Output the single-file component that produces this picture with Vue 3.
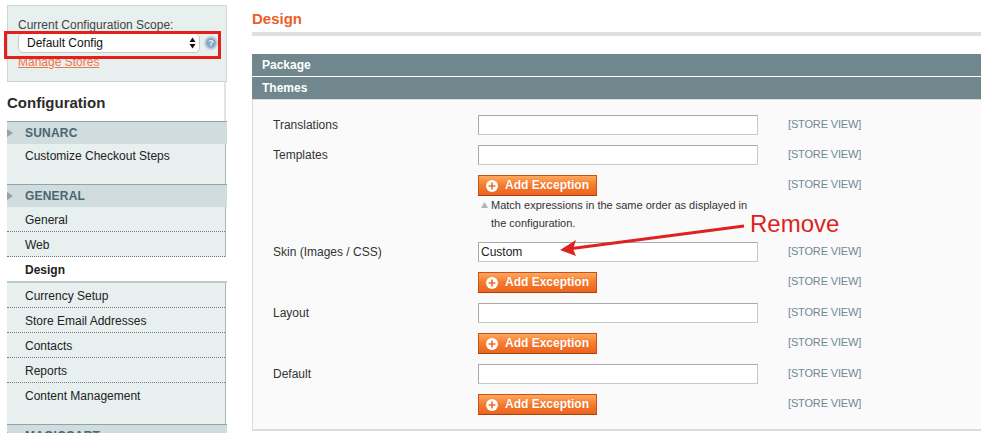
<script setup>
const sections = [
  { title: 'SUNARC', items: [{ label: 'Customize Checkout Steps' }] },
  {
    title: 'GENERAL',
    items: [
      { label: 'General' }, { label: 'Web' }, { label: 'Design', active: true },
      { label: 'Currency Setup' }, { label: 'Store Email Addresses' }, { label: 'Contacts' },
      { label: 'Reports' }, { label: 'Content Management' },
    ],
  },
  { title: 'MAGICCART', items: [] },
]
const rows = [
  { label: 'Translations', type: 'input', value: '' },
  { label: 'Templates', type: 'input', value: '' },
  { type: 'button', note: true },
  { label: 'Skin (Images / CSS)', type: 'input', value: 'Custom' },
  { type: 'button' },
  { label: 'Layout', type: 'input', value: '' },
  { type: 'button' },
  { label: 'Default', type: 'input', value: '' },
  { type: 'button' },
]
</script>

<template>
  <div class="page">
    <aside class="side">
      <div class="scope">
        <div class="scope-label">Current Configuration Scope:</div>
        <div class="scope-row">
          <div class="select-wrap">
            <select class="select"><option>Default Config</option></select>
            <svg class="updown" width="7" height="12" viewBox="0 0 7 12"><path d="M3.5 0.5 6.5 5H.5zM3.5 11.5 .5 7h6z" fill="#111"/></svg>
          </div>
          <svg class="help" width="14" height="14" viewBox="0 0 14 14">
            <circle cx="7" cy="7" r="6.5" fill="#b9cbdc" stroke="#c6d4de"/>
            <circle cx="7" cy="7" r="4.8" fill="#86a3c4"/>
            <text x="7" y="10.2" text-anchor="middle" class="help-q">?</text>
          </svg>
        </div>
        <a class="manage">Manage Stores</a>
      </div>
      <h3 class="side-title">Configuration</h3>
      <section v-for="s in sections" :key="s.title" class="group">
        <div class="group-head">
          <svg class="tri" width="6" height="8" viewBox="0 0 6 8"><path d="M0 0 6 4 0 8z" fill="#8fa5a8"/></svg>
          {{ s.title }}
        </div>
        <ul v-if="s.items.length" class="items">
          <li v-for="it in s.items" :key="it.label" :class="['item', { active: it.active }]">{{ it.label }}</li>
        </ul>
      </section>
    </aside>

    <main class="main">
      <h2 class="title">Design</h2>
      <div class="bar">Package</div>
      <div class="bar second">Themes</div>
      <div class="panel">
        <div v-for="(r, i) in rows" :key="i" :class="['row', r.type]">
          <div class="label">{{ r.label }}</div>
          <div class="value">
            <input v-if="r.type === 'input'" class="text" :value="r.value" />
            <template v-else>
              <button class="btn">
                <svg width="14" height="14" viewBox="0 0 14 14">
                  <circle cx="7" cy="7" r="6" fill="#fff"/>
                  <path d="M7 3.6v6.8M3.6 7h6.8" stroke="#ee6a25" stroke-width="1.6"/>
                </svg>
                <span>Add Exception</span>
              </button>
              <div v-if="r.note" class="note">
                <svg class="note-tri" width="7" height="6" viewBox="0 0 7 6"><path d="M3.5 0 7 6H0z" fill="#a9b8bd"/></svg>
                Match expressions in the same order as displayed in the configuration.
              </div>
            </template>
          </div>
          <div class="scope-tag">[STORE VIEW]</div>
        </div>
      </div>
    </main>

    <div class="mark-box"></div>
    <div class="mark-text">Remove</div>
    <svg class="mark-arrow" width="200" height="40" viewBox="0 0 200 40">
      <path d="M184 3 12 25.5" stroke="#dc2320" stroke-width="3" fill="none"/>
      <path d="M0 27 16 17 13 26 16 33z" fill="#dc2320"/>
    </svg>
  </div>
</template>

<style scoped>
.page {
  position: relative;
  display: flex;
  gap: 25px;
  height: 433px;
  overflow: hidden;
  padding-left: 7px;
  box-sizing: border-box;
  background: #fff;
  font: 12px/16px "Liberation Sans", Arial, sans-serif;
  color: #2f2f2f;
}
.side { width: 220px; flex: none; padding-top: 5px; }
.scope {
  box-sizing: border-box;
  height: 77px;
  padding: 12px 0 0 10px;
  background: #e7efef;
  border: 1px solid #c9d6d6;
  border-right-color: #d0dada;
}
.scope-label { color: #444; line-height: 14px; }
.scope-row { display: flex; align-items: center; gap: 4px; margin-top: 1px; height: 20px; }
.select-wrap { position: relative; width: 182px; height: 20px; }
.select {
  appearance: none;
  width: 100%;
  height: 20px;
  padding: 0 0 0 8px;
  border: 1px solid #c9c9c9;
  border-radius: 5px;
  background: #fff;
  font: 12px "Liberation Sans", Arial, sans-serif;
  color: #111;
}
.updown { position: absolute; right: 4px; top: 4px; }
.help { flex: none; }
.help-q { font: bold 9px "Liberation Sans", Arial, sans-serif; fill: #eef3f8; }
.manage { display: block; margin-top: 1px; color: #f0754a; text-decoration: underline; line-height: 16px; }
.side-title {
  margin: 0 1px 0 0;
  height: 39px;
  font-size: 15px;
  line-height: 41px;
  font-weight: bold;
  color: #2b2b2b;
  border-right: 2px solid #e2e2e2;
}
.group-head {
  display: flex;
  align-items: center;
  height: 23px;
  padding-left: 18px;
  position: relative;
  background: #d0dcdd;
  border-top: 1px solid #8fa5a8;
  box-sizing: border-box;
  font-weight: bold;
  color: #486773;
  letter-spacing: .2px;
}
.tri { position: absolute; left: 0; top: 7px; }
.items {
  list-style: none;
  margin: 0 1px 0 0;
  padding: 0 0 15px;
  background: #e7efef;
  border-right: 1px solid #a9b8b8;
}
.group + .group .items { padding-bottom: 16px; }
.item {
  height: 25px;
  line-height: 24px;
  padding-left: 18px;
  box-sizing: border-box;
  color: #222;
  border-bottom: 1px dotted #777;
}
.group + .group .item { line-height: 26px; }
.item:last-child { border-bottom: 0; }
.group + .group .active {
  height: 26px;
  font-weight: bold;
  background: #fff;
  border-bottom: 2px solid #bfcaca;
  margin-right: -2px;
}
.main { flex: 1; min-width: 0; }
.title {
  margin: 0 0 18px;
  height: 32px;
  border-bottom: 4px solid #dfdfdf;
  font-size: 15px;
  line-height: 38px;
  font-weight: bold;
  color: #eb5e2a;
}
.bar {
  height: 22px;
  padding-left: 10px;
  background: #6f878d;
  color: #fff;
  font-weight: bold;
  line-height: 22px;
}
.second { margin-top: 1px; }
.panel {
  box-sizing: border-box;
  height: 332px;
  padding: 15px 0 0 20px;
  background: #fafafa;
  border: 1px solid #dcdcdc;
  border-width: 1px 0 2px 1px;
}
.row { display: flex; }
.row.input { height: 30px; }
.row.button { height: 31px; }
.row.button:has(.note) { height: 67px; }
.label { width: 205px; flex: none; line-height: 20px; color: #333; }
.value { width: 310px; flex: none; }
.text {
  display: block;
  box-sizing: border-box;
  width: 280px;
  height: 20px;
  padding: 0 2px;
  background: #fff;
  border: 1px solid #aaa;
  border-right-color: #c8c8c8;
  border-bottom-color: #c8c8c8;
  font: 12px "Liberation Sans", Arial, sans-serif;
  color: #222;
}
.btn {
  display: flex;
  align-items: center;
  gap: 6px;
  box-sizing: border-box;
  width: 119px;
  height: 21px;
  padding: 0 0 0 6px;
  border: 1px solid #c8501d;
  border-bottom-color: #a9410f;
  background: linear-gradient(#ffa85c, #f67a2c 50%, #ec6420);
  color: #fff;
  font: bold 12px "Liberation Sans", Arial, sans-serif;
  text-shadow: 0 0 1px #e0621f;
}
.btn span { position: relative; top: -1px; }
.note {
  position: relative;
  width: 272px;
  padding-left: 13px;
  font-size: 11px;
  line-height: 18px;
  color: #333;
}
.note-tri { position: absolute; left: 3px; top: 6px; }
.scope-tag { font-size: 11px; line-height: 18px; color: #6f8992; letter-spacing: -.15px; }
.mark-box {
  position: absolute;
  left: 4px;
  top: 31px;
  width: 217px;
  height: 28px;
  box-sizing: border-box;
  border: 3px solid #e4201b;
}
.mark-text {
  position: absolute;
  left: 750px;
  top: 209px;
  font-size: 24px;
  line-height: 30px;
  color: #dc2320;
}
.mark-arrow { position: absolute; left: 560px; top: 223px; }
</style>
